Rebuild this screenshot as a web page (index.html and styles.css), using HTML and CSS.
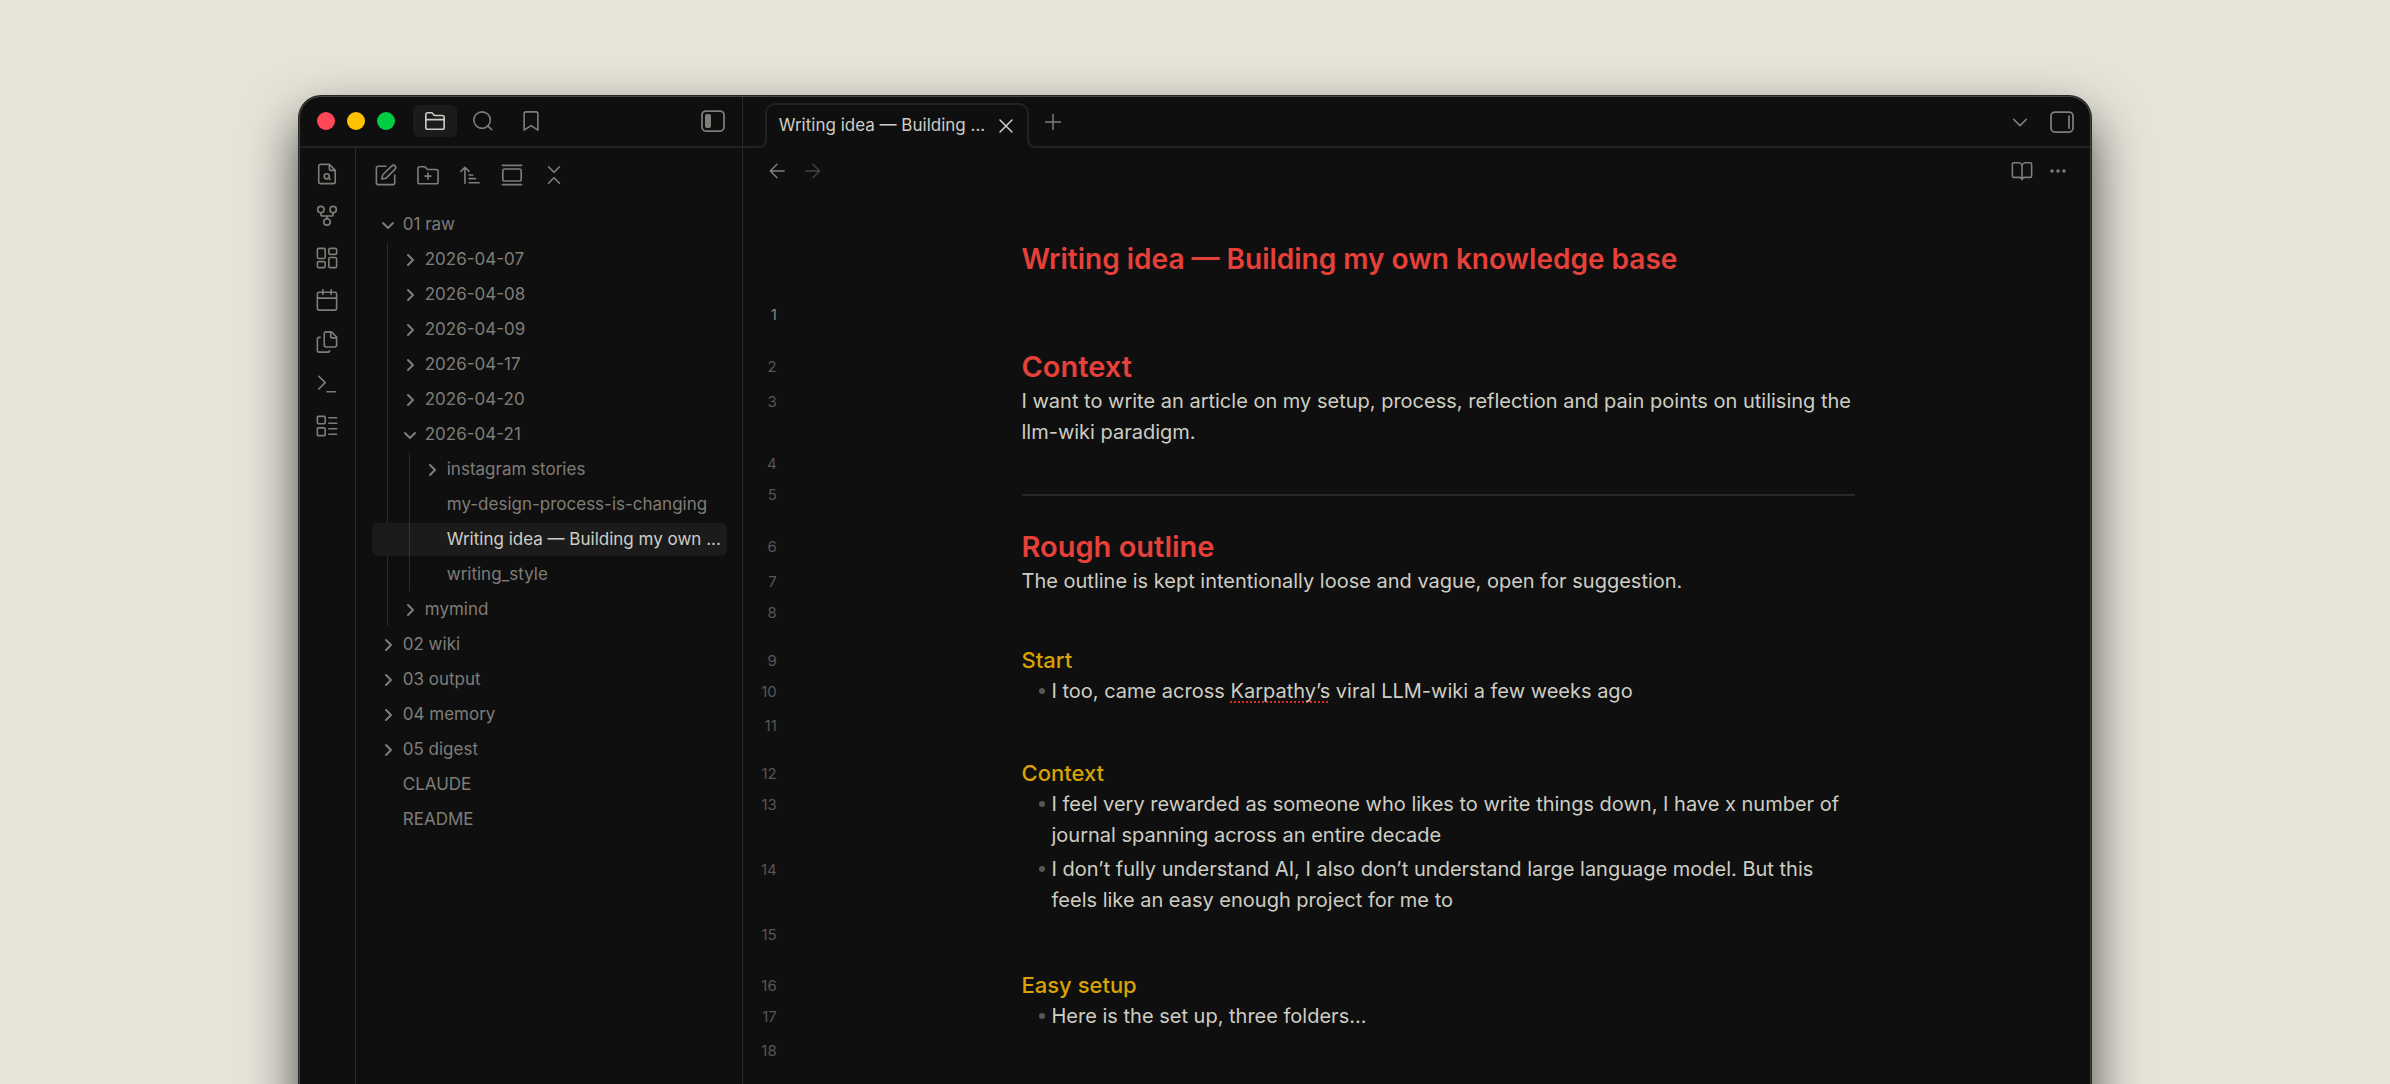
FILE: index.html
```html
<!DOCTYPE html>
<html lang="en">
<head>
<meta charset="utf-8">
<meta name="viewport" content="width=device-width, initial-scale=1">
<title>Writing idea — Building my own knowledge base</title>
<link rel="stylesheet" href="styles.css">
</head>
<body>
<div class="window">
  <div class="left">
    <header class="left-head">
      <div class="lights">
        <button class="light light-close" aria-label="Close window"></button>
        <button class="light light-min" aria-label="Minimise window"></button>
        <button class="light light-max" aria-label="Zoom window"></button>
      </div>
      <nav class="side-tabs" aria-label="Sidebar panels">
        <button class="side-tab is-active" aria-label="Files"><svg class="icon" viewBox="0 0 24 24"><path d="M4 21h16a2 2 0 0 0 2-2V8a2 2 0 0 0-2-2h-7.900a2 2 0 0 1-1.700-.9L9.600 3.900A2 2 0 0 0 7.900 3H4a2 2 0 0 0-2 2v14a2 2 0 0 0 2 2ZM2 10.500h20"/></svg></button>
        <button class="side-tab" aria-label="Search"><svg class="icon" viewBox="0 0 24 24"><circle cx="11" cy="11" r="9"/><path d="m21.500 21.500-4.200-4.200"/></svg></button>
        <button class="side-tab" aria-label="Bookmarks"><svg class="icon" viewBox="0 0 24 24"><path d="m19.500 22-7.500-5-7.500 5V4a2 2 0 0 1 2-2h11a2 2 0 0 1 2 2z"/></svg></button>
      </nav>
      <button class="icon-btn" aria-label="Collapse sidebar"><svg class="icon icon-panel" viewBox="0 0 24 24"><rect x="1" y="2" width="22" height="20" rx="4"/><rect class="solid" x="4" y="5" width="6" height="14" rx="2"/></svg></button>
    </header>
    <div class="left-body">
      <nav class="ribbon" aria-label="Ribbon">
        <button class="icon-btn" aria-label="Quick switcher"><svg class="icon" viewBox="0 0 24 24"><path d="M14.500 1.500H5a2 2 0 0 0-2 2v17a2 2 0 0 0 2 2h14a2 2 0 0 0 2-2V8ZM14.500 1.500v4.500a2 2 0 0 0 2 2h4.500"/><circle cx="11.700" cy="14.500" r="2.800"/><path d="m15.500 18-1.700-1.500"/></svg></button>
        <button class="icon-btn" aria-label="Graph view"><svg class="icon" viewBox="0 0 24 24"><circle cx="12" cy="18.500" r="3.500"/><circle cx="5.300" cy="5" r="3.500"/><circle cx="18.700" cy="5" r="3.500"/><path d="M18.700 8.500v1.500a2 2 0 0 1-2 2H7.300a2 2 0 0 1-2-2V8.500M12 12v3"/></svg></button>
        <button class="icon-btn" aria-label="Canvas"><svg class="icon" viewBox="0 0 24 24"><rect x="1.500" y="1.500" width="8.500" height="11" rx="1.500"/><rect x="14" y="1.500" width="8.500" height="6.500" rx="1.500"/><rect x="14" y="11.500" width="8.500" height="11" rx="1.500"/><rect x="1.500" y="16" width="8.500" height="6.500" rx="1.500"/></svg></button>
        <button class="icon-btn" aria-label="Daily note"><svg class="icon" viewBox="0 0 24 24"><path d="M7.500 1v5M16.500 1v5M1.500 10h21"/><rect x="1.500" y="3.500" width="21" height="19.500" rx="2"/></svg></button>
        <button class="icon-btn" aria-label="Templates"><svg class="icon" viewBox="0 0 24 24"><path d="M17 .9h-6a2 2 0 0 0-2 2v12.500a2 2 0 0 0 2 2h9.500a2 2 0 0 0 2-2V6.500ZM16 .9v4.600a2 2 0 0 0 2 2h4.500M4.500 7h-1a2 2 0 0 0-2 2v12a2 2 0 0 0 2 2h9.500a2 2 0 0 0 2-1.500"/></svg></button>
        <button class="icon-btn" aria-label="Terminal"><svg class="icon" viewBox="0 0 24 24"><path d="m3 17.500 7-7-7-7M12 20.500h9"/></svg></button>
        <button class="icon-btn" aria-label="Bases"><svg class="icon" viewBox="0 0 24 24"><rect x="1.500" y="1.500" width="8.500" height="8" rx="1"/><rect x="1.500" y="14" width="8.500" height="8.500" rx="1"/><path d="M14 3h8.500M14 9h8.500M14 15h8.500M14 21h8.500"/></svg></button>
      </nav>
      <section class="explorer">
        <div class="actions">
          <button class="icon-btn" aria-label="New note"><svg class="icon" viewBox="0 0 24 24"><path d="M12 2.500H3.500a2 2 0 0 0-2 2v16a2 2 0 0 0 2 2h16a2 2 0 0 0 2-2v-8.500"/><path d="M18.400 2.100a2.100 2.100 0 0 1 3.500 3.500l-9.500 9.500a2 2 0 0 1-.9.500l-3.400.8a.5.5 0 0 1-.6-.6l.8-3.400a2 2 0 0 1 .5-.9z"/></svg></button>
          <button class="icon-btn" aria-label="New folder"><svg class="icon" viewBox="0 0 24 24"><path d="M12 10v6.500M8.700 13.200h6.600M21 21.500a2 2 0 0 0 2-2V8a2 2 0 0 0-2-2h-8.900a2 2 0 0 1-1.700-.9L9.600 3.900A2 2 0 0 0 7.900 3H3a2 2 0 0 0-2 2v14.500a2 2 0 0 0 2 2Z"/></svg></button>
          <button class="icon-btn" aria-label="Change sort order"><svg class="icon" viewBox="0 0 24 24"><path d="m2 8 4.500-4.500L11 8M6.500 3.500V21M11 12h4M11 16h7M11 20.500h11"/></svg></button>
          <button class="icon-btn" aria-label="Auto-reveal current file"><svg class="icon" viewBox="0 0 24 24"><path d="M1.500 1.500h21M1.500 22.500h21"/><rect x="2" y="5.500" width="20" height="13" rx="2"/></svg></button>
          <button class="icon-btn" aria-label="Collapse all"><svg class="icon" viewBox="0 0 24 24"><path d="m6 21 6-6 6 6M6 3l6 6 6-6"/></svg></button>
        </div>
        <ul class="tree">
          <li><button class="row"><svg class="chev open" viewBox="0 0 14 14"><path d="m5 2 5 5-5 5"/></svg><span>01 raw</span></button>
            <ul class="nest">
              <li><button class="row"><svg class="chev" viewBox="0 0 14 14"><path d="m5 2 5 5-5 5"/></svg><span>2026-04-07</span></button></li>
              <li><button class="row"><svg class="chev" viewBox="0 0 14 14"><path d="m5 2 5 5-5 5"/></svg><span>2026-04-08</span></button></li>
              <li><button class="row"><svg class="chev" viewBox="0 0 14 14"><path d="m5 2 5 5-5 5"/></svg><span>2026-04-09</span></button></li>
              <li><button class="row"><svg class="chev" viewBox="0 0 14 14"><path d="m5 2 5 5-5 5"/></svg><span>2026-04-17</span></button></li>
              <li><button class="row"><svg class="chev" viewBox="0 0 14 14"><path d="m5 2 5 5-5 5"/></svg><span>2026-04-20</span></button></li>
              <li><button class="row"><svg class="chev open" viewBox="0 0 14 14"><path d="m5 2 5 5-5 5"/></svg><span>2026-04-21</span></button>
                <ul class="nest nest-2">
                  <li><button class="row"><svg class="chev" viewBox="0 0 14 14"><path d="m5 2 5 5-5 5"/></svg><span>instagram stories</span></button></li>
                  <li><a class="row file" href="#"><span>my-design-process-is-changing</span></a></li>
                  <li><a class="row file is-selected" href="#" aria-current="page"><span>Writing idea — Building my own ...</span></a></li>
                  <li><a class="row file" href="#"><span>writing_style</span></a></li>
                </ul>
              </li>
              <li><button class="row"><svg class="chev" viewBox="0 0 14 14"><path d="m5 2 5 5-5 5"/></svg><span>mymind</span></button></li>
            </ul>
          </li>
          <li><button class="row"><svg class="chev" viewBox="0 0 14 14"><path d="m5 2 5 5-5 5"/></svg><span>02 wiki</span></button></li>
          <li><button class="row"><svg class="chev" viewBox="0 0 14 14"><path d="m5 2 5 5-5 5"/></svg><span>03 output</span></button></li>
          <li><button class="row"><svg class="chev" viewBox="0 0 14 14"><path d="m5 2 5 5-5 5"/></svg><span>04 memory</span></button></li>
          <li><button class="row"><svg class="chev" viewBox="0 0 14 14"><path d="m5 2 5 5-5 5"/></svg><span>05 digest</span></button></li>
          <li><a class="row file" href="#"><span>CLAUDE</span></a></li>
          <li><a class="row file" href="#"><span>README</span></a></li>
        </ul>
      </section>
    </div>
  </div>

  <main class="main">
    <header class="tabs">
      <div class="tab">
        <span class="tab-title">Writing idea — Building ...</span>
        <button class="tab-close" aria-label="Close tab"><svg class="icon" viewBox="0 0 24 24"><path d="m4 4 16 16M20 4 4 20"/></svg></button>
      </div>
      <button class="icon-btn new-tab" aria-label="New tab"><svg class="icon icon-plus" viewBox="0 0 24 24"><path d="M3 12h18M12 3v18"/></svg></button>
      <div class="tabs-end">
        <button class="icon-btn" aria-label="Tab list"><svg class="icon" viewBox="0 0 24 24"><path d="m5 9 7 7 7-7"/></svg></button>
        <button class="icon-btn" aria-label="Expand right sidebar"><svg class="icon icon-panel" viewBox="0 0 24 24"><rect x="1" y="2" width="22" height="20" rx="4"/><path d="M19 6v12"/></svg></button>
      </div>
    </header>
    <div class="view-head">
      <button class="icon-btn" aria-label="Back"><svg class="icon icon-small" viewBox="0 0 24 24"><path d="m12 20-8-8 8-8M20.500 12H4"/></svg></button>
      <button class="icon-btn" aria-label="Forward" disabled><svg class="icon icon-small" viewBox="0 0 24 24"><path d="m12 4 8 8-8 8M20 12H3.500"/></svg></button>
      <div class="view-end">
        <button class="icon-btn" aria-label="Reading view"><svg class="icon" viewBox="0 0 24 24"><path d="M12 6v15.500M3 19a1.500 1.500 0 0 1-1.500-1.500V4.500A1.500 1.500 0 0 1 3 3h5a4 4 0 0 1 4 4 4 4 0 0 1 4-4h5a1.500 1.500 0 0 1 1.500 1.500v13A1.500 1.500 0 0 1 21 19h-6a3 3 0 0 0-3 2.500A3 3 0 0 0 9 19z"/></svg></button>
        <button class="icon-btn" aria-label="More options"><svg class="icon icon-dots" viewBox="0 0 24 24"><circle cx="4" cy="12" r="2.300"/><circle cx="12" cy="12" r="2.300"/><circle cx="20" cy="12" r="2.300"/></svg></button>
      </div>
    </div>
    <article class="note">
      <div class="line title"><h1>Writing idea — Building my own knowledge base</h1></div>
      <div class="line"><span class="num is-current">1</span></div>
      <div class="line h2"><span class="num">2</span><h2>Context</h2></div>
      <div class="line"><span class="num">3</span><p>I want to write an article on my setup, process, reflection and pain points on utilising the llm-wiki paradigm.</p></div>
      <div class="line"><span class="num">4</span></div>
      <div class="line"><span class="num">5</span><hr></div>
      <div class="line h2"><span class="num">6</span><h2>Rough outline</h2></div>
      <div class="line"><span class="num">7</span><p>The outline is kept intentionally loose and vague, open for suggestion.</p></div>
      <div class="line"><span class="num">8</span></div>
      <div class="line h3"><span class="num">9</span><h3>Start</h3></div>
      <div class="line item"><span class="num">10</span><p>I too, came across <span class="misspelt">Karpathy’s</span> viral LLM-wiki a few weeks ago</p></div>
      <div class="line"><span class="num">11</span></div>
      <div class="line h3"><span class="num">12</span><h3>Context</h3></div>
      <div class="line item"><span class="num">13</span><p>I feel very rewarded as someone who likes to write things down, I have x number of journal spanning across an entire decade</p></div>
      <div class="line item"><span class="num">14</span><p>I don’t fully understand AI, I also don’t understand large language model. But this feels like an easy enough project for me to</p></div>
      <div class="line item"><span class="num">15</span></div>
      <div class="line h3"><span class="num">16</span><h3>Easy setup</h3></div>
      <div class="line item"><span class="num">17</span><p>Here is the set up, three folders...</p></div>
      <div class="line"><span class="num">18</span></div>
    </article>
  </main>
</div>
</body>
</html>
```
FILE: styles.css
```css
:root {
  --bg: #0f0f0f;
  --line: #222221;
  --active: #1b1b1b;
  --muted: #7f7d78;
  --faint: #575653;
  --text: #cecdc3;
  --red: #e5413a;
  --yellow: #daa203;
}

* { box-sizing: border-box; }

body {
  margin: 0;
  height: 100vh;
  overflow: hidden;
  padding: 96px 12.5% 0;
  background: #e6e4d9;
  color: var(--text);
  font-family: Inter, "Noto Sans", sans-serif;
  font-size: 20px;
  line-height: 31px;
}

ul { list-style: none; margin: 0; padding: 0; }
h1, h2, h3, p { margin: 0; }

button {
  display: flex;
  align-items: center;
  justify-content: center;
  padding: 0;
  border: 0;
  background: none;
  color: inherit;
  font: inherit;
}

.window {
  display: flex;
  height: 100vh;
  border: 1px solid #454644;
  border-radius: 22px;
  overflow: hidden;
  background: var(--bg);
  box-shadow: 0 0 0 1px #252624, 0 24px 52px rgba(0, 0, 0, .7);
}

.icon {
  width: 22px;
  height: 22px;
  fill: none;
  stroke: currentColor;
  stroke-width: 1.75;
  stroke-linecap: round;
  stroke-linejoin: round;
}
.icon-panel { width: 24px; height: 24px; }
.icon-small, .icon-plus { width: 20px; height: 20px; }
.icon-dots { width: 18px; height: 18px; fill: currentColor; stroke: none; }
.icon .solid { fill: currentColor; stroke: none; }

.icon-btn { width: 34px; height: 34px; color: var(--muted); }
.icon-btn:disabled { color: #42413f; }

/* Left column */
.left {
  flex: 0 0 443px;
  display: flex;
  flex-direction: column;
  min-width: 0;
  border-right: 1px solid #2b2b2a;
}

.left-head {
  display: flex;
  align-items: center;
  height: 51px;
  padding: 0 12px 1px 17px;
  border-bottom: 2px solid var(--line);
}

.lights { display: flex; gap: 12px; }
.light { width: 18px; height: 18px; border-radius: 50%; }
.light-close { background: #ff4757; }
.light-min { background: #ffc200; }
.light-max { background: #00cc44; }

.side-tabs { display: flex; gap: 4px; margin-left: 18px; }
.side-tab { width: 44px; height: 32px; border-radius: 6px; color: var(--muted); }
.side-tab.is-active { background: var(--active); color: var(--text); }
.left-head .icon-btn { margin-left: auto; }

.left-body { flex: 1; display: flex; min-height: 0; }

.ribbon {
  flex: 0 0 56px;
  display: flex;
  flex-direction: column;
  align-items: center;
  gap: 8px;
  padding-top: 9px;
  border-right: 1px solid #2b2b2a;
}

.explorer { flex: 1; min-width: 0; padding: 10px 15px 0 16px; }
.actions { display: flex; gap: 14px; }
.actions .icon-btn { width: 28px; }

/* File tree */
.tree { margin-top: 16px; color: var(--muted); font-size: 17px; line-height: 33px; }
.tree .row {
  display: flex;
  align-items: center;
  justify-content: flex-start;
  gap: 8px;
  width: 100%;
  height: 33px;
  margin-bottom: 2px;
  padding: 0 8px 0 9px;
  border-radius: 6px;
  color: inherit;
  text-decoration: none;
}
.row span { white-space: nowrap; }
.tree .file { padding-left: 31px; }
.tree .nest .row { padding-left: 31px; }
.tree .nest-2 .row { padding-left: 53px; }
.tree .nest-2 .file { padding-left: 75px; }
.tree .is-selected { background: var(--active); color: var(--text); }

.chev {
  flex: none;
  width: 14px;
  height: 14px;
  fill: none;
  stroke: currentColor;
  stroke-width: 2;
  stroke-linecap: round;
  stroke-linejoin: round;
}
.chev.open { transform: rotate(90deg); }

.nest { position: relative; }
.nest::before {
  content: "";
  position: absolute;
  top: 0;
  bottom: 0;
  left: 15px;
  width: 1px;
  background: rgba(255, 255, 255, .12);
}
.nest-2::before { left: 37px; }

/* Editor */
.main { flex: 1; min-width: 0; }

.tabs {
  display: flex;
  align-items: center;
  height: 51px;
  padding: 0 11px 0 22px;
  border-bottom: 2px solid var(--line);
}

.tab {
  position: relative;
  align-self: flex-end;
  display: flex;
  align-items: center;
  justify-content: space-between;
  width: 264px;
  height: 45px;
  margin-bottom: -2px;
  padding: 0 12px 2px;
  border: 2px solid var(--line);
  border-bottom: 0;
  border-radius: 10px 10px 0 0;
  background: var(--bg);
  font-size: 17px;
}
.tab::before, .tab::after {
  content: "";
  position: absolute;
  bottom: 0;
  width: 10px;
  height: 10px;
  border: 2px solid var(--line);
  border-top: 0;
  background: var(--bg);
}
.tab::before {
  right: 100%;
  border-left: 0;
  border-bottom-right-radius: 8px;
  box-shadow: 3px 3px 0 var(--bg);
}
.tab::after {
  left: 100%;
  border-right: 0;
  border-bottom-left-radius: 8px;
  box-shadow: -3px 3px 0 var(--bg);
}
.tab-title { white-space: nowrap; }
.tab-close .icon { width: 18px; height: 18px; stroke-width: 2; }

.new-tab { margin-left: 7px; }
.tabs-end { display: flex; gap: 8px; margin-left: auto; }

.view-head { display: flex; align-items: center; height: 46px; padding: 0 15px 0 17px; gap: 2px; }
.view-end { display: flex; gap: 2px; margin-left: auto; }

.note { padding-top: 45px; }

.line {
  display: grid;
  grid-template-columns: 43px 1fr minmax(0, 833px) 1fr;
  min-height: 31px;
}
.line > :not(.num) { grid-column: 3; }

.num {
  padding-right: 9px;
  color: var(--faint);
  font-size: 15px;
  text-align: right;
}
.num.is-current { color: #878580; }

.title { margin-bottom: 20px; }
h1, h2 { color: var(--red); font-weight: 600; }
h1 { font-size: 28px; line-height: 40px; }
h2 { font-size: 29px; }
h3 { color: var(--yellow); font-size: 22px; font-weight: 500; line-height: 31px; }

.h2 { margin-top: 17px; }
.h2 .num, h2 { line-height: 39px; }
.h3 { margin-top: 17px; }

hr {
  align-self: center;
  width: 100%;
  height: 2px;
  margin: 0;
  border: 0;
  background: #282827;
}

.item { padding-bottom: 3px; }
.item p { position: relative; padding-left: 30px; }
.item p::before {
  content: "";
  position: absolute;
  top: 12px;
  left: 17px;
  width: 6px;
  height: 6px;
  border-radius: 50%;
  background: var(--faint);
}

.misspelt {
  text-decoration: underline dotted #d1302a 2px;
  text-decoration-skip-ink: none;
  text-underline-offset: 3px;
}
```
